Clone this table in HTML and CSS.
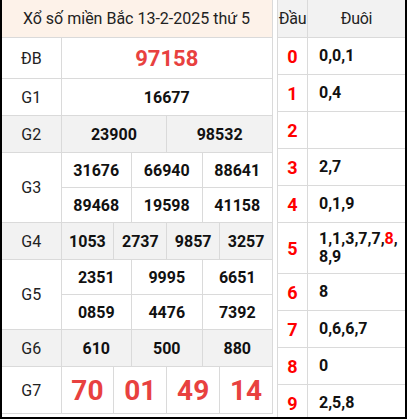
FILE: index.html
```html
<!DOCTYPE html>
<html lang="vi">
<head>
<meta charset="utf-8">
<link rel="stylesheet" href="styles.css">
</head>
<body>
<div class="sheet">
  <table class="kq">
    <colgroup>
      <col class="c-lbl">
      <col span="12">
    </colgroup>
    <thead>
      <tr class="r-title"><th colspan="13" class="title">Xổ số miền Bắc 13-2-2025 thứ 5</th></tr>
    </thead>
    <tbody>
      <tr class="r-db"><td class="lbl">ĐB</td><td colspan="12" class="num db">97158</td></tr>
      <tr class="r-std"><td class="lbl">G1</td><td colspan="12" class="num">16677</td></tr>
      <tr class="r-std alt"><td class="lbl">G2</td><td colspan="6" class="num">23900</td><td colspan="6" class="num">98532</td></tr>
      <tr class="r-sub"><td class="lbl" rowspan="2">G3</td><td colspan="4" class="num">31676</td><td colspan="4" class="num">66940</td><td colspan="4" class="num">88641</td></tr>
      <tr class="r-sub"><td colspan="4" class="num">89468</td><td colspan="4" class="num">19598</td><td colspan="4" class="num">41158</td></tr>
      <tr class="r-std alt"><td class="lbl">G4</td><td colspan="3" class="num">1053</td><td colspan="3" class="num">2737</td><td colspan="3" class="num">9857</td><td colspan="3" class="num">3257</td></tr>
      <tr class="r-sub"><td class="lbl" rowspan="2">G5</td><td colspan="4" class="num">2351</td><td colspan="4" class="num">9995</td><td colspan="4" class="num">6651</td></tr>
      <tr class="r-sub"><td colspan="4" class="num">0859</td><td colspan="4" class="num">4476</td><td colspan="4" class="num">7392</td></tr>
      <tr class="r-std alt"><td class="lbl">G6</td><td colspan="4" class="num">610</td><td colspan="4" class="num">500</td><td colspan="4" class="num">880</td></tr>
      <tr class="r-g7"><td class="lbl">G7</td><td colspan="3" class="num big">70</td><td colspan="3" class="num big">01</td><td colspan="3" class="num big">49</td><td colspan="3" class="num big">14</td></tr>
    </tbody>
  </table>

  <table class="lt">
    <colgroup>
      <col class="c-head">
      <col>
    </colgroup>
    <thead>
      <tr class="r-h"><th class="hd">Đầu</th><th class="hd">Đuôi</th></tr>
    </thead>
    <tbody>
      <tr><td class="head">0</td><td class="tail">0,0,1</td></tr>
      <tr><td class="head">1</td><td class="tail">0,4</td></tr>
      <tr><td class="head">2</td><td class="tail"></td></tr>
      <tr><td class="head">3</td><td class="tail">2,7</td></tr>
      <tr><td class="head">4</td><td class="tail">0,1,9</td></tr>
      <tr class="r-two"><td class="head">5</td><td class="tail">1,1,3,7,7,<span class="hit">8</span>,<br>8,9</td></tr>
      <tr><td class="head">6</td><td class="tail">8</td></tr>
      <tr><td class="head">7</td><td class="tail">0,6,6,7</td></tr>
      <tr><td class="head">8</td><td class="tail">0</td></tr>
      <tr><td class="head">9</td><td class="tail">2,5,8</td></tr>
    </tbody>
  </table>
</div>
</body>
</html>
```

FILE: styles.css
```css
html, body {
  margin: 0;
  padding: 0;
  background: #fff;
}

body {
  font-family: Roboto, "Liberation Sans", Arial, sans-serif;
  color: #111;
}

.sheet {
  display: flex;
  align-items: flex-start;
  gap: 4px;
  width: 403px;
  height: 417px;
  border: 2px solid #000;
  border-top: 0;
  overflow: hidden;
}

table {
  border-collapse: collapse;
  table-layout: fixed;
  flex: none;
}

td, th {
  border: 1px solid #dadada;
  padding: 0;
  text-align: center;
  vertical-align: middle;
}

/* left: results */
.kq {
  width: 273px;
  margin-left: -2px;
}

.c-lbl {
  width: 60px;
}

.kq .title {
  background: #fdf2e9;
  font-weight: 400;
  font-size: 16px;
  color: #222;
  border-top: 0;
  border-left: 0;
  height: 37px;
}

.kq .lbl {
  font-size: 16px;
  color: #222;
  border-left: 2px solid #000;
}

.kq .num {
  font-size: 16px;
  font-weight: 700;
  color: #111;
}

.kq .db {
  font-size: 22px;
  color: #e8413f;
}

.kq .big {
  font-size: 28px;
  color: #e8413f;
}

.r-title { height: 37px; }
.r-db { height: 41px; }
.r-std { height: 37px; }
.r-sub { height: 35px; }
.r-g7 { height: 47px; }

.alt td {
  background: #f2f2f2;
}

/* right: loto */
.lt {
  width: 128px;
}

.c-head {
  width: 30px;
}

.lt .hd {
  background: #f2f2f2;
  font-weight: 400;
  font-size: 16px;
  color: #222;
  height: 37px;
  border-top: 0;
  letter-spacing: -0.3px;
}

.lt tr {
  height: 37px;
}

.lt tr.r-two {
  height: 51px;
}

.lt .head {
  font-size: 18px;
  font-weight: 700;
  color: #f00;
}

.lt .tail {
  text-align: left;
  padding-left: 11px;
  font-size: 16px;
  font-weight: 700;
  line-height: 18px;
  color: #111;
  border-right: 0;
}

.lt .hd:last-child {
  border-right: 0;
}

.hit {
  color: #f00;
}
```
